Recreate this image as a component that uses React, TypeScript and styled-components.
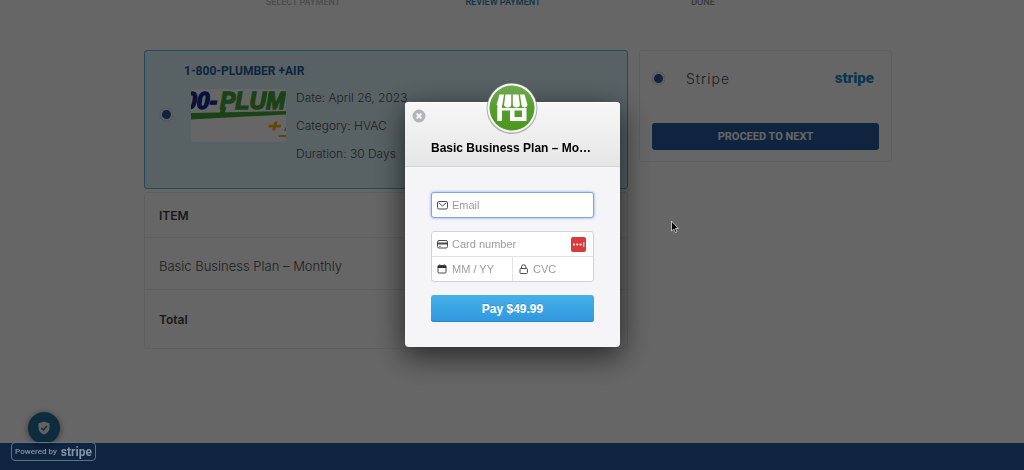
import React from "react";
import styled, { createGlobalStyle } from "styled-components";

const navy = "#265a9e";
const labelFont = 'Roboto, "Open Sans", sans-serif';

const GlobalStyle = createGlobalStyle`
  *, *::before, *::after { box-sizing: border-box; }
  body {
    margin: 0;
    background: #fff;
    color: #505050;
    font-family: Inter, "Open Sans", sans-serif;
    font-size: 13px;
  }
`;

const Page = styled.div`
  display: flex;
  flex-direction: column;
  min-height: 100vh;
  overflow: hidden;
`;

const Steps = styled.ol`
  display: grid;
  grid-template-columns: repeat(3, 200px);
  justify-content: center;
  list-style: none;
  margin: -6px 18px 0 0;
  padding: 0;
`;

const Step = styled.li<{ $tone: string }>`
  color: ${(p) => p.$tone};
  font-family: ${labelFont};
  font-size: 9px;
  font-weight: 500;
  line-height: 16px;
  text-align: center;
`;

const Content = styled.main`
  display: grid;
  grid-template-columns: 484px 253px;
  gap: 11px;
  align-items: start;
  justify-content: center;
  flex: 1;
  padding: 40px 0 40px 12px;
`;

const Listing = styled.section`
  display: flex;
  border: 1px solid #55b8e2;
  border-radius: 3px;
  background: #dcf5fc;
  padding: 10px 16px 20px 15px;
`;

const Radio = styled.input`
  appearance: none;
  width: 13px;
  height: 13px;
  margin: 0;
  border: 2px solid #f2f2f2;
  border-radius: 50%;
  background: #2257a0;
  box-shadow: 0 0 1px #888;
`;

const ListingRadio = styled(Radio)`
  align-self: center;
`;

const ListingBody = styled.div`
  padding-left: 11px;
`;

const ListingTitle = styled.h2`
  margin: 0 0 3px;
  color: ${navy};
  font-family: ${labelFont};
  font-size: 12px;
  font-weight: 700;
  line-height: 20px;
`;

const ListingRow = styled.div`
  display: flex;
  gap: 10px;
  padding-left: 7px;
`;

const Thumb = styled.svg`
  width: 95px;
  height: 53px;
  margin-top: 5px;
  border-radius: 4px;
`;

const Facts = styled.ul`
  list-style: none;
  margin: 0;
  padding: 0;
  font-size: 12px;
  font-weight: 300;
  line-height: 28px;
`;

const Items = styled.table`
  width: 100%;
  margin-top: 3px;
  border: 1px solid #ececec;
  border-radius: 3px;
  border-spacing: 0;
  text-align: left;
`;

const Cell = styled.td<{ $height: number; $last?: boolean }>`
  height: ${(p) => p.$height}px;
  padding: 5px 14px 0;
  border-bottom: ${(p) => (p.$last ? "0" : "1px solid #ececec")};
  font-size: 13px;
  font-weight: 300;
`;

const HeadCell = styled(Cell)`
  padding: 0 14px;
  color: #404040;
  font-size: 12px;
  font-weight: 600;
`;

const Method = styled.section`
  border: 1px solid #ececec;
  border-radius: 3px;
  padding: 15px 12px 11px;
`;

const MethodRow = styled.div`
  display: flex;
  align-items: center;
  height: 24px;
  margin-bottom: 33px;
  padding-right: 5px;
`;

const MethodLabel = styled.label`
  flex: 1;
  margin-left: 21px;
  font-size: 14px;
  font-weight: 300;
  letter-spacing: 1px;
`;

const StripeMark = styled.span<{ $color: string }>`
  color: ${(p) => p.$color};
  font-family: ${labelFont};
  font-size: 15px;
  font-weight: 900;
  line-height: 16px;
`;

const Proceed = styled.button`
  width: 100%;
  height: 27px;
  border: 0;
  border-radius: 3px;
  background: ${navy};
  color: #fff;
  font-family: ${labelFont};
  font-size: 11px;
  font-weight: 700;
`;

const Footer = styled.footer`
  height: 27px;
  background: ${navy};
`;

const Shield = styled.button`
  position: fixed;
  bottom: 26px;
  left: 28px;
  display: grid;
  place-items: center;
  width: 32px;
  height: 32px;
  padding: 0;
  border: 0;
  border-radius: 50%;
  background: #236f9c;
  box-shadow: 0 1px 6px rgba(0, 0, 0, 0.5);
`;

const Overlay = styled.div`
  position: fixed;
  inset: 0;
  display: flex;
  align-items: flex-start;
  justify-content: center;
  padding: 102px 0 0 1px;
  background: rgba(0, 0, 0, 0.6);
`;

const Powered = styled.a`
  position: absolute;
  bottom: 9px;
  left: 11px;
  display: flex;
  align-items: center;
  justify-content: center;
  gap: 4px;
  width: 85px;
  height: 19px;
  border: 1px solid #5f7185;
  border-radius: 4px;
  color: #8295a8;
  font-family: ${labelFont};
  font-size: 8px;
  font-weight: 500;
  text-decoration: none;
  white-space: nowrap;
`;

const PoweredMark = styled(StripeMark)`
  font-size: 12px;
  font-weight: 700;
`;

const Modal = styled.section`
  width: 215px;
  border-radius: 4px;
  background: #f5f5f7;
  box-shadow: 0 8px 30px 2px rgba(0, 0, 0, 0.6);
  font-family: "Liberation Sans", Arial, sans-serif;
`;

const ModalHead = styled.header`
  position: relative;
  height: 65px;
  padding: 36px 26px 0;
  border-bottom: 1px solid #d5d5d7;
  border-radius: 4px 4px 0 0;
  background: linear-gradient(#f7f7f8, #e6e6e7);
  box-shadow: inset 0 1px #fff;
`;

const Badge = styled.svg`
  position: absolute;
  top: -21px;
  left: 80px;
  width: 54px;
  height: 54px;
`;

const Close = styled.button`
  position: absolute;
  top: 7px;
  left: 7px;
  width: 14px;
  height: 14px;
  padding: 0;
  border: 0;
  background: none;

  svg { display: block; }
`;

const ModalTitle = styled.h1`
  margin: 0;
  overflow: hidden;
  color: #000;
  font-size: 12px;
  font-weight: 700;
  line-height: 20px;
  text-overflow: ellipsis;
  white-space: nowrap;
`;

const Form = styled.form`
  display: flex;
  flex-direction: column;
  gap: 13px;
  padding: 25px 26px;
`;

const Field = styled.label`
  display: flex;
  align-items: center;
  gap: 4px;
  flex: 1;
  min-width: 0;
  height: 24px;
  padding: 0 7px 0 5px;

  svg { flex: none; }
`;

const EmailBox = styled.div`
  display: flex;
  border: 1px solid #7da7e3;
  border-radius: 3px;
  background: #fff;
  box-shadow: 0 0 3px #7da7e3;
`;

const CardBox = styled.div`
  border: 1px solid #d3d3d6;
  border-radius: 3px;
  background: #fff;
`;

const CardRow = styled.div`
  display: flex;

  & + & { border-top: 1px solid #e3e3e5; }
  & > * + * { border-left: 1px solid #e3e3e5; }
`;

const Input = styled.input`
  flex: 1;
  width: 0;
  min-width: 0;
  padding: 0;
  border: 0;
  outline: 0;
  background: none;
  font-family: inherit;
  font-size: 11px;

  &::placeholder { color: #9c9ca0; opacity: 1; }
`;

const Pay = styled.button`
  height: 27px;
  border: 0;
  border-radius: 3px;
  background: linear-gradient(#45b1e8, #3097de);
  box-shadow: inset 0 -1px #2988cd;
  color: #fff;
  font-family: inherit;
  font-size: 12px;
  font-weight: 700;
  text-shadow: 0 -1px rgba(0, 0, 0, 0.15);
`;

const Cursor = styled.svg`
  position: absolute;
  top: 220px;
  left: 670px;
`;

const PlumberLogo = () => (
  <Thumb viewBox="0 0 95 53" role="img" aria-label="1-800-PLUMBER +AIR logo">
    <rect width="95" height="53" fill="#fff" />
    <g fontFamily="Liberation Sans, Arial, sans-serif" fontSize="23" fontWeight="700" fontStyle="italic" strokeWidth="1.4">
      <text x="-7" y="20" fill="#122c8e" stroke="#122c8e">00-</text>
      <text x="29" y="20" fill="#44a638" stroke="#44a638">PLUM</text>
    </g>
    <path d="M0 24L95 22V25.500L0 30.500Z" fill="#44a638" />
    <path d="M30.500 18L28 26H33L35.500 18Z" fill="#44a638" />
    <path d="M83.500 32.500H86.500L85.700 35.800H90L89.400 38.500H85L84.200 41.500H81.200L82 38.500H77.200L77.800 35.800H82.700Z" fill="#f6ad12" />
    <path d="M92.500 42L95 37.500V42ZM87.500 46H95V48H88Z" fill="#f6ad12" />
  </Thumb>
);

const StoreBadge = () => (
  <Badge viewBox="0 0 54 54" aria-hidden="true">
    <defs>
      <linearGradient id="leaf" x1="0" y1="0" x2="0" y2="1">
        <stop offset="0" stopColor="#72a94e" />
        <stop offset=".5" stopColor="#579d2f" />
        <stop offset="1" stopColor="#4c981c" />
      </linearGradient>
    </defs>
    <circle cx="27" cy="27.500" r="25.500" fill="#8b8e8f" opacity=".65" />
    <circle cx="27" cy="27" r="24.500" fill="#f6f6f7" />
    <circle cx="27" cy="27" r="22.500" fill="url(#leaf)" />
    <path d="M14.500 25H17V39.500H12.500V25Z" fill="#fff" />
    <g fill="#fff">
      <path d="M14.500 13.500H19L17.400 23.500a2.900 2.900 0 0 1-5.700 0Z" />
      <path d="M20.500 13.500H26.200V23.500a3.500 2.900 0 0 1-7.100 0Z" />
      <path d="M27.800 13.500H33.500L34.900 23.500a3.500 2.900 0 0 1-7.100 0Z" />
      <path d="M35 13.500H39.500L42.400 23.500a2.900 2.900 0 0 1-5.900 0Z" />
      <path fillRule="evenodd" d="M12.500 27H41.500V40H25V29.500H17V40H12.500ZM29.500 29.500V36H37V29.500Z" />
    </g>
  </Badge>
);

const EmailIcon = () => (
  <svg width="11" height="10" viewBox="0 0 11 10" fill="none" stroke="#4a4a4d">
    <rect x=".5" y="1.500" width="10" height="7.500" rx="1.500" />
    <path d="M2 3L5.500 6L9 3" />
  </svg>
);

const CardIcon = () => (
  <svg width="11" height="10" viewBox="0 0 11 10" fill="none" stroke="#4a4a4d">
    <rect x=".5" y="1.500" width="10" height="7.500" rx="1.500" />
    <path d="M0 4.500H11" strokeWidth="2" />
    <path d="M2 7.300H4" strokeWidth=".7" />
  </svg>
);

const DateIcon = () => (
  <svg width="11" height="10" viewBox="0 0 11 10" fill="none" stroke="#4a4a4d">
    <rect x="1" y="1.500" width="8" height="7.500" rx="1" />
    <path d="M.8 2.800H9.200" strokeWidth="2.400" stroke="#303033" />
    <path d="M2.800 .3V2M7.200 .3V2" />
  </svg>
);

const LockIcon = () => (
  <svg width="11" height="10" viewBox="0 0 11 10" fill="none" stroke="#4a4a4d">
    <rect x="2" y="4.500" width="7.500" height="5" rx="1" />
    <path d="M3.500 4.500V3a2.200 2.200 0 0 1 4.400 0V4.500" />
  </svg>
);

const PasswordIcon = () => (
  <svg width="15" height="15" viewBox="0 0 15 15">
    <rect width="15" height="15" rx="2" fill="#d93a3c" />
    <g fill="#fff">
      <circle cx="3" cy="7.500" r="1.100" />
      <circle cx="6.300" cy="7.500" r="1.100" />
      <circle cx="9.600" cy="7.500" r="1.100" />
      <rect x="12.300" y="5" width="1" height="5" />
    </g>
  </svg>
);

export default function App() {
  return (
    <>
      <GlobalStyle />
      <Page>
        <Steps>
          <Step $tone="#bdbdbd">SELECT PAYMENT</Step>
          <Step $tone="#2582b8">REVIEW PAYMENT</Step>
          <Step $tone="#8f8f8f">DONE</Step>
        </Steps>
        <Content>
          <div>
            <Listing>
              <ListingRadio type="radio" name="listing" defaultChecked aria-label="1-800-PLUMBER +AIR" />
              <ListingBody>
                <ListingTitle>1-800-PLUMBER +AIR</ListingTitle>
                <ListingRow>
                  <PlumberLogo />
                  <Facts>
                    <li>Date: April 26, 2023</li>
                    <li>Category: HVAC</li>
                    <li>Duration: 30 Days</li>
                  </Facts>
                </ListingRow>
              </ListingBody>
            </Listing>
            <Items>
              <thead>
                <tr><HeadCell as="th" $height={45}>ITEM</HeadCell></tr>
              </thead>
              <tbody>
                <tr><Cell $height={52}>Basic Business Plan – Monthly</Cell></tr>
                <tr><HeadCell as="th" $height={58} $last>Total</HeadCell></tr>
              </tbody>
            </Items>
          </div>
          <Method>
            <MethodRow>
              <Radio type="radio" id="pay-stripe" name="method" defaultChecked />
              <MethodLabel htmlFor="pay-stripe">Stripe</MethodLabel>
              <StripeMark $color="#1489c8">stripe</StripeMark>
            </MethodRow>
            <Proceed type="button">PROCEED TO NEXT</Proceed>
          </Method>
        </Content>
        <Footer />
        <Shield type="button" aria-label="Privacy settings">
          <svg width="12" height="14" viewBox="0 0 12 14">
            <path d="M6 .5L11.500 2.500V6.500C11.500 10 9 12.500 6 13.500C3 12.500 .5 10 .5 6.500V2.500Z" fill="#f4f4f4" />
            <path d="M3.300 7L5.300 9L8.900 5" fill="none" stroke="#236f9c" strokeWidth="1.400" />
          </svg>
        </Shield>
      </Page>
      <Overlay>
        <Powered href="#stripe">
          Powered by <PoweredMark $color="#8295a8">stripe</PoweredMark>
        </Powered>
        <Modal role="dialog" aria-labelledby="checkout-title">
          <ModalHead>
            <Close type="button" aria-label="Close">
              <svg width="14" height="14" viewBox="0 0 14 14">
                <circle cx="7" cy="7" r="6.500" fill="#b5b5b7" />
                <path d="M4.600 4.600L9.400 9.400M9.400 4.600L4.600 9.400" stroke="#fff" strokeWidth="1.600" />
              </svg>
            </Close>
            <StoreBadge />
            <ModalTitle id="checkout-title">Basic Business Plan – Monthly</ModalTitle>
          </ModalHead>
          <Form>
            <EmailBox>
              <Field>
                <EmailIcon />
                <Input type="email" placeholder="Email" aria-label="Email" />
              </Field>
            </EmailBox>
            <CardBox>
              <CardRow>
                <Field>
                  <CardIcon />
                  <Input placeholder="Card number" aria-label="Card number" />
                  <PasswordIcon />
                </Field>
              </CardRow>
              <CardRow>
                <Field>
                  <DateIcon />
                  <Input placeholder="MM / YY" aria-label="Expiry date" />
                </Field>
                <Field>
                  <LockIcon />
                  <Input placeholder="CVC" aria-label="CVC" />
                </Field>
              </CardRow>
            </CardBox>
            <Pay type="button">Pay $49.99</Pay>
          </Form>
        </Modal>
        <Cursor width="9" height="14" viewBox="0 0 9 14" aria-hidden="true">
          <path d="M1.500 1V11L3.800 9L5.400 12.600L7 11.900L5.400 8.500H8.300Z" fill="#000" stroke="#ddd" strokeWidth=".8" />
        </Cursor>
      </Overlay>
    </>
  );
}
